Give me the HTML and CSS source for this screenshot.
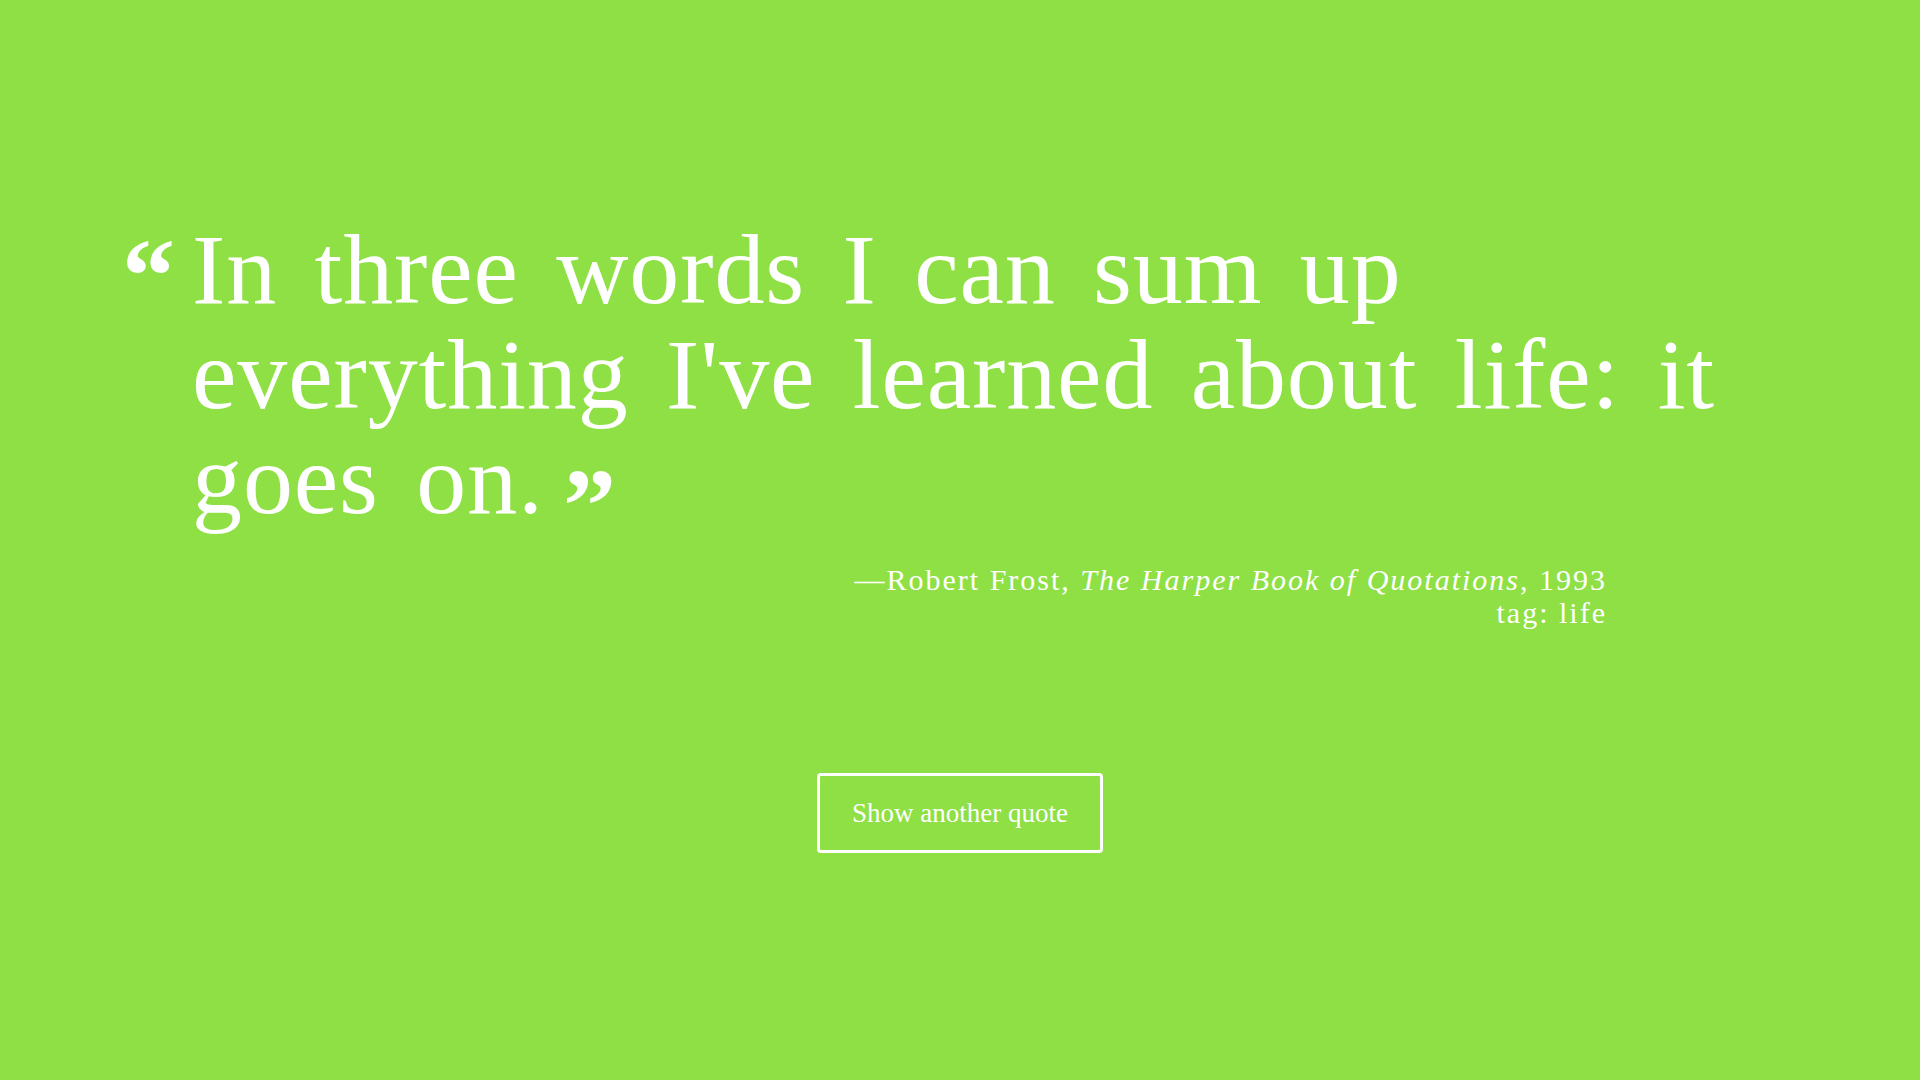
FILE: index.html
```html
<!DOCTYPE html>
<html lang="en">
<head>
<meta charset="utf-8">
<title>Random Quote</title>
<link rel="stylesheet" href="styles.css">
</head>
<body>
<main class="page">
  <section class="quote-box">
    <blockquote class="quote">
      <span class="qmark qmark-open">&ldquo;</span>In three words I can sum up everything I've learned about life: it goes on.<span class="qmark qmark-close">&rdquo;</span>
    </blockquote>
    <p class="source">&mdash;Robert Frost, <cite>The Harper Book of Quotations</cite>, 1993<br>tag: life</p>
  </section>
  <button class="next-btn" type="button">Show another quote</button>
</main>
</body>
</html>
```
FILE: styles.css
```css
* { box-sizing: border-box; }
html, body { margin: 0; padding: 0; }
body {
  background: #8ee045;
  color: #ffffff;
  font-family: "Liberation Serif", "Times New Roman", serif;
}
.page {
  min-height: 100vh;
  display: flex;
  flex-direction: column;
  align-items: center;
  justify-content: center;
}
.quote-box {
  width: 80%;
}
.quote {
  position: relative;
  margin: 0;
  font-size: 100px;
  line-height: 1.05;
  letter-spacing: 0.9px;
  word-spacing: 11.5px;
}
.qmark {
  font-family: "Liberation Serif", serif;
  font-weight: bold;
  font-size: 106px;
  line-height: 0;
  letter-spacing: 0;
  word-spacing: 0;
}
.qmark-open {
  position: absolute;
  left: -70px;
  top: 60px;
}
.qmark-close {
  margin-left: 19px;
  vertical-align: -29px;
}
.source {
  margin: 31px 121px 0 0;
  text-align: right;
  font-size: 30px;
  line-height: 1.1;
  letter-spacing: 2px;
}
.source cite { font-style: italic; }
.next-btn {
  margin-top: 144px;
  margin-bottom: 10px;
  width: 286px;
  height: 80px;
  background: transparent;
  border: 3px solid #ffffff;
  border-radius: 4px;
  color: #ffffff;
  font-family: "Liberation Serif", "Times New Roman", serif;
  font-size: 27px;
  cursor: pointer;
}
```
